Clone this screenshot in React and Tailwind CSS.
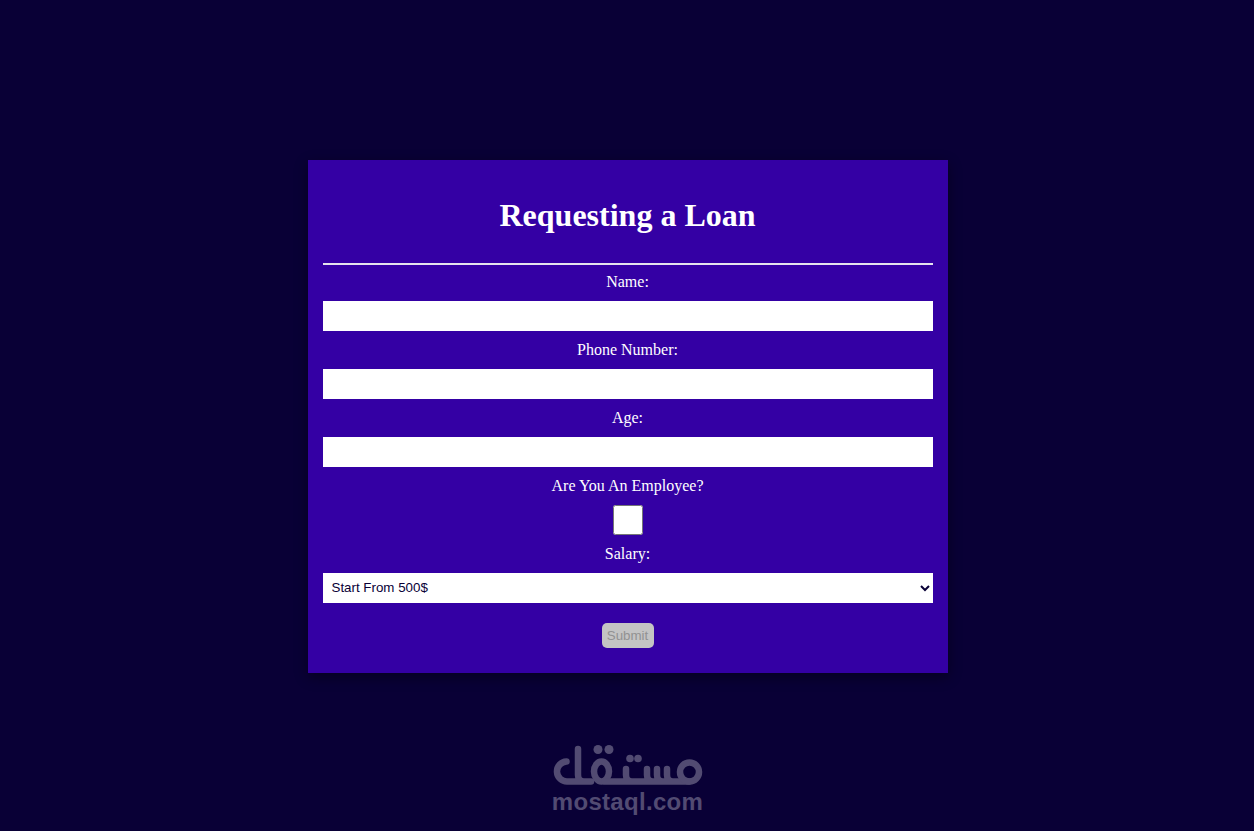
import React from 'react';

const Logo = () => (
  <div className="mt-[72px] ml-[1px] flex w-[152px] flex-col items-center">
    <svg width="152" height="42" viewBox="551 745 152 42" fill="none" stroke="#524b72" strokeWidth="6.5" strokeLinecap="round" strokeLinejoin="round">
      {/* final lam with its bowl */}
      <path d="M565.5 761.5A10 10 0 0 0 566.5 781.5H590M577 749V775Q577 781.5 583 781.5" />
      {/* qaf */}
      <ellipse cx="600.5" cy="771.5" rx="7.5" ry="10" />
      {/* ta and seen teeth */}
      <path d="M604 781.5H688M625 769V775Q625 781.5 631 781.5M646 769V775Q646 781.5 652 781.5M656 769V775Q656 781.5 662 781.5M666 769V775Q666 781.5 672 781.5" />
      {/* meem */}
      <circle cx="688.5" cy="772" r="9.5" />
      <g fill="#524b72" stroke="none">
        <circle cx="597" cy="749.5" r="4.5" />
        <circle cx="608" cy="749.5" r="4.5" />
        <circle cx="629" cy="758.5" r="3.8" />
        <circle cx="637" cy="758.5" r="3.8" />
      </g>
    </svg>
    <p className="mt-[1px] font-['Liberation_Sans',sans-serif] text-[24px] font-bold leading-[28px] tracking-[0.3px] text-[#524b72]">mostaql.com</p>
  </div>
);

const Field = ({ label, children }) => (
  <div className="flex flex-col items-center">
    <label className="my-[10px] text-base leading-[18px]">{label}</label>
    {children}
  </div>
);

const App = () => {
  return (
    <div className="flex h-[831px] flex-col items-center overflow-hidden bg-[#090036] pt-[160px] font-['Liberation_Serif',serif] text-white">
      <form className="ml-[1px] h-[513px] w-[640px] bg-[#3400a4] px-[15px] pt-[35px] shadow-[0_4px_12px_rgba(0,0,0,0.4)]">
        <h1 className="mb-[21px] text-center text-[32px] font-bold leading-[40px]">Requesting a Loan</h1>
        <hr className="mt-[28px] h-[2px] border-0 bg-[#e6e3ee]" />
        <div className="-mt-[2px] flex flex-col">
          <Field label="Name:">
            <input type="text" className="h-[30px] w-full bg-white" />
          </Field>
          <Field label="Phone Number:">
            <input type="text" className="h-[30px] w-full bg-white" />
          </Field>
          <Field label="Age:">
            <input type="text" className="h-[30px] w-full bg-white" />
          </Field>
          <Field label="Are You An Employee?">
            <input type="checkbox" className="m-0 h-[30px] w-[30px]" />
          </Field>
          <Field label="Salary:">
            <select className="h-[30px] w-full bg-white pb-[2px] pl-[5px] font-['Liberation_Sans',sans-serif] text-[13.33px] text-[#090036]">
              <option>Start From 500$</option>
            </select>
          </Field>
          <button type="submit" disabled className="mx-auto mt-[20px] h-[25px] w-[52px] rounded-[5px] bg-[#c4c4c4] font-['Liberation_Sans',sans-serif] text-[13.33px] text-[#929292]">
            Submit
          </button>
        </div>
      </form>
      <Logo />
    </div>
  );
};

export default App;
